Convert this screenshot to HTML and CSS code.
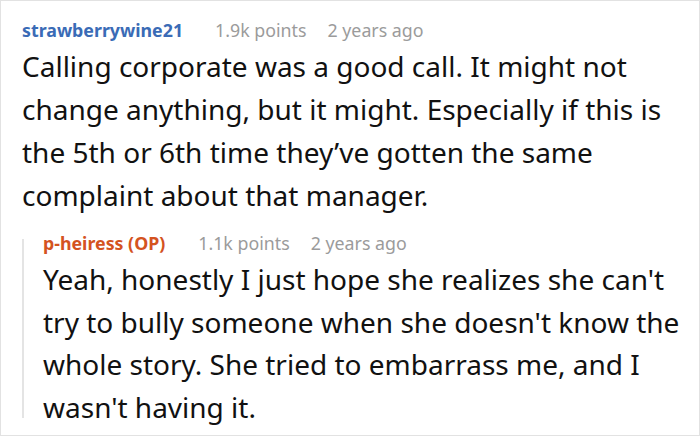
FILE: index.html
```html
<!DOCTYPE html>
<html lang="en">
<head>
<meta charset="utf-8">
<link rel="stylesheet" href="styles.css">
</head>
<body>
<div class="card">
  <div class="comment">
    <div class="meta">
      <span class="user">strawberrywine21</span>
      <span class="points">1.9k points</span>
      <span class="age">2 years ago</span>
    </div>
    <p class="body">Calling corporate was a good call. It might not change anything, but it might. Especially if this is the 5th or 6th time they’ve gotten the same complaint about that manager.</p>
  </div>
  <div class="reply">
    <div class="thread-line"></div>
    <div class="comment">
      <div class="meta">
        <span class="user op">p-heiress (OP)</span>
        <span class="points">1.1k points</span>
        <span class="age">2 years ago</span>
      </div>
      <p class="body">Yeah, honestly I just hope she realizes she can't try to bully someone when she doesn't know the whole story. She tried to embarrass me, and I wasn't having it.</p>
    </div>
  </div>
</div>
</body>
</html>
```
FILE: styles.css
```css
html, body {
  margin: 0;
  padding: 0;
  background: #fff;
}
.card {
  box-sizing: border-box;
  width: 700px;
  height: 436px;
  border: 1px solid #e2e2e2;
  padding: 18px 14px 0 21px;
  font-family: "Noto Sans", "Open Sans", sans-serif;
  overflow: hidden;
}
.meta {
  display: flex;
  align-items: baseline;
  font-size: 17.8px;
  line-height: 22px;
  white-space: nowrap;
}
.user {
  font-weight: 700;
  color: #3a6bb6;
  margin-right: 32px;
}
.user.op {
  color: #d4531f;
  margin-right: 33px;
}
.points {
  color: #9b9b9b;
  margin-right: 21px;
}
.age {
  color: #9b9b9b;
}
.body {
  margin: 4px 0 0;
  font-size: 28px;
  line-height: 42.9px;
  color: #111;
}
.reply {
  display: flex;
  margin-top: 15px;
}
.thread-line {
  width: 2px;
  flex: none;
  background: #e4e4e4;
  margin: 7px 19px 11px 0;
}
.reply .body {
  margin-top: 4px;
}
```
